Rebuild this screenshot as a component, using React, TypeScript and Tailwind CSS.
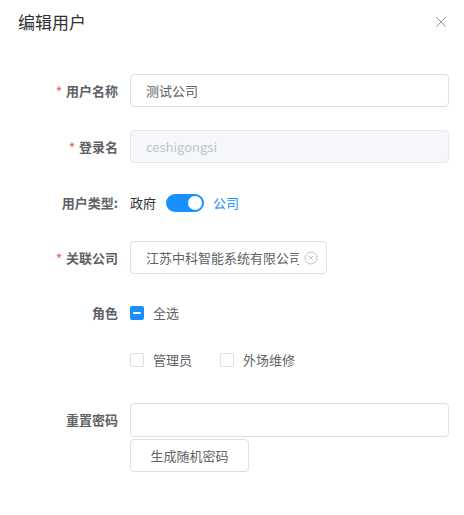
import { X } from "lucide-react";

const font = { fontFamily: '"Noto Sans CJK SC", "Noto Sans", sans-serif' };

const Label = ({ text, required }: { text: string; required?: boolean }) => (
  <div className="w-[118px] h-[33px] shrink-0 flex items-center justify-end text-[13px] font-bold text-[#606266]">
    {required && <span className="text-[#f56c6c] mr-[4px] text-[12px]">*</span>}
    {text}
  </div>
);

const Checkbox = ({ state }: { state: "none" | "indeterminate" }) =>
  state === "indeterminate" ? (
    <span className="w-[14px] h-[14px] rounded-[2px] bg-[#1890ff] flex items-center justify-center">
      <span className="w-[8px] h-[2px] bg-white rounded-sm" />
    </span>
  ) : (
    <span className="w-[14px] h-[14px] rounded-[2px] border border-[#dcdfe6] bg-white" />
  );

const App = () => {
  return (
    <div style={font} className="w-[464px] h-[515px] bg-white relative">
      {/* Header */}
      <div className="flex items-center justify-between pl-[18px] pr-[14px] h-[44px]">
        <span className="text-[17px] text-[#303133]">编辑用户</span>
        <X size={18} strokeWidth={1.3} className="text-[#909399]" />
      </div>

      <div className="pt-[30px] pr-[15px]">
        {/* 用户名称 */}
        <div className="flex gap-[12px]">
          <Label text="用户名称" required />
          <div className="flex-1 h-[33px] border border-[#dcdfe6] rounded-[4px] px-[15px] flex items-center text-[13px] text-[#606266]">
            测试公司
          </div>
        </div>

        {/* 登录名 */}
        <div className="flex gap-[12px] mt-[23px]">
          <Label text="登录名" required />
          <div className="flex-1 h-[33px] border border-[#e4e7ed] bg-[#f5f7fa] rounded-[4px] px-[15px] flex items-center text-[13px] text-[#c0c4cc]">
            ceshigongsi
          </div>
        </div>

        {/* 用户类型 */}
        <div className="flex gap-[12px] mt-[23px]">
          <Label text="用户类型:" />
          <div className="flex items-center text-[13px]">
            <span className="text-[#303133]">政府</span>
            <span className="ml-[10px] w-[38px] h-[18px] rounded-full bg-[#1890ff] relative">
              <span className="absolute right-[2px] top-[2px] w-[14px] h-[14px] rounded-full bg-white" />
            </span>
            <span className="ml-[9px] text-[#1890ff]">公司</span>
          </div>
        </div>

        {/* 关联公司 */}
        <div className="flex gap-[12px] mt-[22px]">
          <Label text="关联公司" required />
          <div className="w-[197px] h-[33px] border border-[#dcdfe6] rounded-[4px] pl-[15px] pr-[8px] flex items-center text-[13px] text-[#606266]">
            <span className="flex-1 overflow-hidden whitespace-nowrap">江苏中科智能系统有限公司</span>
            <svg width="14" height="14" viewBox="0 0 14 14" className="ml-[5px] shrink-0">
              <circle cx="7" cy="7" r="6" fill="none" stroke="#c0c4cc" strokeWidth="1" />
              <path d="M5 5 L9 9 M9 5 L5 9" stroke="#c0c4cc" strokeWidth="1" />
            </svg>
          </div>
        </div>

        {/* 角色 */}
        <div className="flex gap-[12px] mt-[22px]">
          <Label text="角色" />
          <div className="flex items-center text-[13px] text-[#606266]">
            <Checkbox state="indeterminate" />
            <span className="ml-[9px]">全选</span>
          </div>
        </div>
        <div className="flex gap-[12px] mt-[14px]">
          <div className="w-[118px] h-[33px] shrink-0" />
          <div className="flex items-center text-[13px] text-[#606266]">
            <Checkbox state="none" />
            <span className="ml-[9px]">管理员</span>
            <span className="ml-[28px]" />
            <Checkbox state="none" />
            <span className="ml-[9px]">外场维修</span>
          </div>
        </div>

        {/* 重置密码 */}
        <div className="flex gap-[12px] mt-[27px]">
          <Label text="重置密码" />
          <div className="flex-1 flex flex-col">
            <div className="h-[34px] border border-[#dcdfe6] rounded-[4px]" />
            <button className="mt-[2px] w-[119px] h-[33px] border border-[#dcdfe6] rounded-[4px] text-[13px] text-[#606266] bg-white">
              生成随机密码
            </button>
          </div>
        </div>
      </div>
    </div>
  );
};

export default App;
